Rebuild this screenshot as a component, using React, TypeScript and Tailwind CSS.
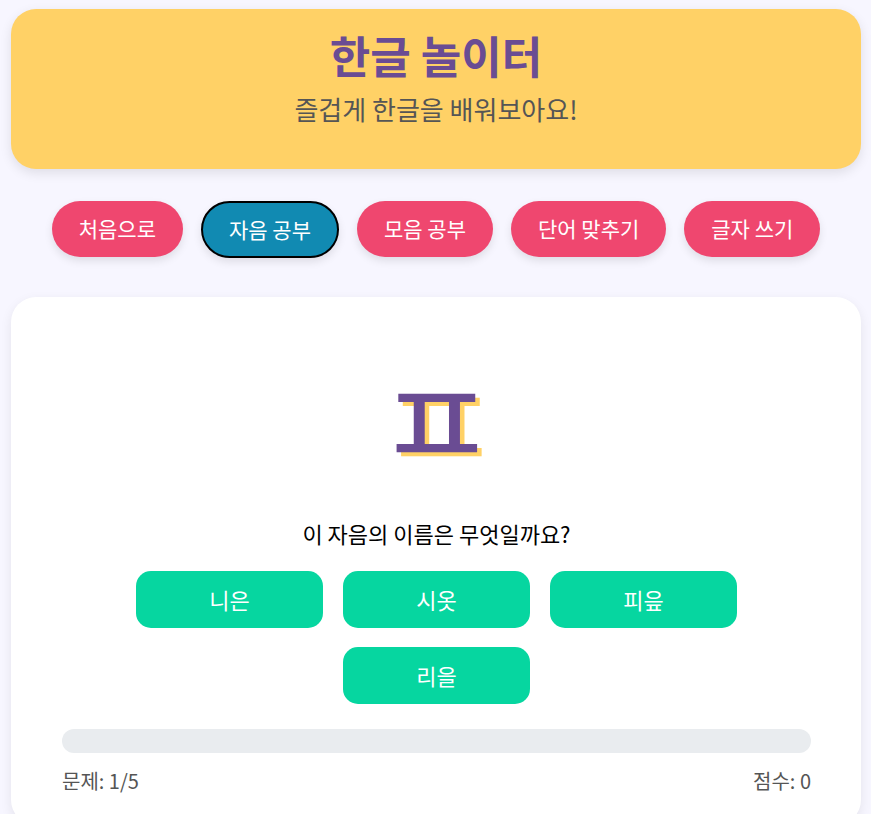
const NAV = ["처음으로", "자음 공부", "모음 공부", "단어 맞추기", "글자 쓰기"];
const OPTIONS = ["니은", "시옷", "피읖", "리을"];

const font = { fontFamily: '"Noto Sans CJK KR", "Noto Sans", sans-serif' };

export default function App() {
  return (
    <div className="min-h-screen bg-[#f7f6ff] pl-[11px] pr-[10px] pt-[9px]" style={font}>
      <header className="rounded-[25px] bg-[#ffd166] pt-[20px] pb-[42px] text-center shadow-[0_4px_12px_rgba(0,0,0,0.1)]">
        <h1 className="text-[44px] font-bold leading-[52px] text-[#6a4c93]">한글 놀이터</h1>
        <p className="mt-[10px] text-[26px] leading-[36px] text-[#555]">즐겁게 한글을 배워보아요!</p>
      </header>

      <nav className="mt-[32px] flex justify-center gap-[18px]">
        {NAV.map((n, i) => (
          <button
            key={n}
            className={
              i === 1
                ? "h-[57px] rounded-full border-2 border-black bg-[#118ab2] px-[26px] text-[21px] text-white shadow-[0_4px_8px_rgba(0,0,0,0.1)]"
                : "h-[56px] rounded-full bg-[#ef476f] px-[27px] text-[21px] text-white shadow-[0_4px_8px_rgba(0,0,0,0.1)]"
            }
          >
            {n}
          </button>
        ))}
      </nav>

      <main className="mt-[39px] rounded-[25px] bg-white pl-[51px] pr-[50px] pb-[30px] pt-[53px] shadow-[0_4px_12px_rgba(0,0,0,0.08)]">
        <div className="text-center text-[120px] font-normal leading-[132px] text-[#6a4c93]">
          <span className="inline-block scale-x-[1.1]" style={{ textShadow: "4px 4px 0 #ffd166" }}>
            ㅍ
          </span>
        </div>
        <p className="mt-[36px] text-center text-[22px] leading-[30px] text-black">이 자음의 이름은 무엇일까요?</p>

        <div className="mt-[23px] flex flex-wrap justify-center gap-x-[20px] gap-y-[19px]">
          {OPTIONS.map((o) => (
            <button
              key={o}
              className="h-[57px] w-[187px] rounded-[15px] bg-[#06d6a0] text-[22px] text-white"
            >
              {o}
            </button>
          ))}
        </div>

        <div className="mt-[25px] h-[24px] rounded-full bg-[#e9ecef]" />

        <div className="mt-[14px] flex justify-between text-[20px] leading-[28px] text-[#555]">
          <span>문제: 1/5</span>
          <span>점수: 0</span>
        </div>
      </main>
    </div>
  );
}
